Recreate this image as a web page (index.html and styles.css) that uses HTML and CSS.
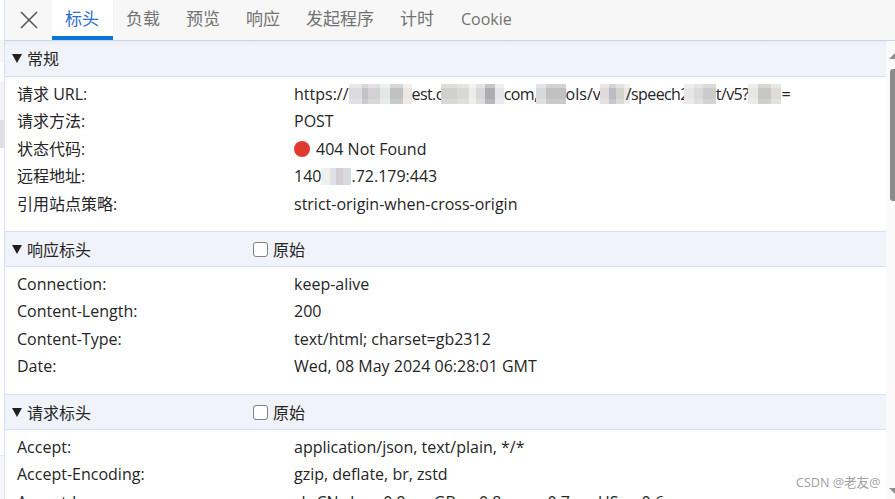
FILE: index.html
```html
<!DOCTYPE html>
<html lang="zh-CN">
<head>
<meta charset="utf-8">
<title>标头</title>
<link rel="stylesheet" href="styles.css">
</head>
<body>
<div class="page">
  <aside class="strip">
    <div class="s s1"></div><div class="s s2"></div><div class="s s3"></div><div class="s s4"></div><div class="s s5"></div><div class="s s6"></div>
  </aside>
  <main class="main">
    <nav class="tabs">
      <button class="close" aria-label="关闭">
        <svg width="18" height="18" viewBox="0 0 18 18"><path d="M1 1L17 17M17 1L1 17" fill="none" stroke="#555" stroke-width="1.6"/></svg>
      </button>
      <span class="tab active">标头</span>
      <span class="tab">负载</span>
      <span class="tab">预览</span>
      <span class="tab">响应</span>
      <span class="tab">发起程序</span>
      <span class="tab">计时</span>
      <span class="tab">Cookie</span>
    </nav>
    <div class="body">
      <div class="content">
        <section class="sec">
          <header class="head"><i class="tri"></i><span class="title">常规</span></header>
          <div class="rows first">
            <div class="row"><span class="k">请求 URL:</span><span class="v">https://<i class="r r1"></i><span class="tight">est.c</span><i class="r r2"></i><span class="tight">com,</span><i class="r r3"></i>ols/v<i class="r r4"></i><span class="tight">/speech2</span><i class="r r5"></i><span class="tight">t/v5?</span><i class="r r6"></i>=</span></div>
            <div class="row"><span class="k">请求方法:</span><span class="v">POST</span></div>
            <div class="row"><span class="k">状态代码:</span><span class="v"><i class="dot"></i>404 Not Found</span></div>
            <div class="row"><span class="k">远程地址:</span><span class="v">140<i class="r r7"></i>.72.179:443</span></div>
            <div class="row"><span class="k">引用站点策略:</span><span class="v">strict-origin-when-cross-origin</span></div>
          </div>
        </section>
        <section class="sec">
          <header class="head"><i class="tri"></i><span class="title">响应标头</span><i class="check"></i><span>原始</span></header>
          <div class="rows">
            <div class="row"><span class="k">Connection:</span><span class="v">keep-alive</span></div>
            <div class="row"><span class="k">Content-Length:</span><span class="v">200</span></div>
            <div class="row"><span class="k">Content-Type:</span><span class="v">text/html; charset=gb2312</span></div>
            <div class="row"><span class="k">Date:</span><span class="v">Wed, 08 May 2024 06:28:01 GMT</span></div>
          </div>
        </section>
        <section class="sec">
          <header class="head"><i class="tri"></i><span class="title">请求标头</span><i class="check"></i><span>原始</span></header>
          <div class="rows">
            <div class="row"><span class="k">Accept:</span><span class="v">application/json, text/plain, */*</span></div>
            <div class="row"><span class="k">Accept-Encoding:</span><span class="v">gzip, deflate, br, zstd</span></div>
            <div class="row"><span class="k">Accept-Language:</span><span class="v">zh-CN,zh;q=0.9,en-GB;q=0.8,en;q=0.7,en-US;q=0.6</span></div>
          </div>
        </section>
      </div>
      <div class="scrollbar">
        <i class="arrow up"></i>
        <i class="thumb"></i>
        <i class="arrow down"></i>
      </div>
    </div>
  </main>
</div>
<div class="mark">CSDN @老友@</div>
</body>
</html>
```
FILE: styles.css
```css
* { box-sizing: border-box; }
html, body { margin: 0; height: 100%; overflow: hidden; background: #fff; }
body {
  font-family: "Open Sans", "Noto Sans CJK SC", sans-serif;
  font-size: 16px;
  color: #252525;
}
i { font-style: normal; }
.page { display: flex; width: 895px; height: 499px; }

.strip {
  width: 5px;
  flex: none;
  display: flex;
  flex-direction: column;
  border-right: 1px solid #d3e2f8;
}
.s1 { height: 40px; background: #fff; }
.s2 { height: 22px; background: #f5f5f5; }
.s3 { height: 20px; background: #fff; }
.s4 { height: 38px; background: #f3f3f3; }
.s5 { height: 28px; background: #dfdfdf; }
.s6 { flex: 1; background: linear-gradient(#fff 0, #fff 307px, #dfe7f3 307px, #dfe7f3 308px, #f6f6f6 308px); }

.main { flex: 1; min-width: 0; display: flex; flex-direction: column; }

.tabs {
  height: 41px;
  flex: none;
  display: flex;
  align-items: stretch;
  background: #f7f7f7;
  border-bottom: 1px solid #c6d6ea;
}
.close {
  width: 47px;
  flex: none;
  border: 0;
  padding: 0 0 1px 0;
  background: none;
  display: flex;
  align-items: center;
  justify-content: center;
}
.tab {
  padding: 0 13px 1px;
  font-size: 17px;
  line-height: 38px;
  color: #727272;
  white-space: nowrap;
}
.tab:last-child { font-size: 16px; margin-left: 1px; }
.tab.active {
  color: #2a6fcf;
  background: #fff;
  box-shadow: inset 0 -4px 0 #0a78d7;
  height: 40px;
  width: 61px;
}

.body { flex: 1; min-height: 0; display: flex; }
.content { flex: 1; min-width: 0; overflow: hidden; }

.sec { display: block; }
.head {
  height: 36px;
  display: flex;
  align-items: center;
  padding: 0 0 1px 7px;
  background: linear-gradient(#e9edf3 0, #f0f3f9 4px);
  border-bottom: 1px solid #d3e2f8;
  white-space: nowrap;
}
.sec + .sec .head {
  padding: 1px 0 0 7px;
  background: #f0f3f9;
  border-top: 1px solid #d3e2f8;
}
.tri {
  width: 0;
  height: 0;
  margin: 1px 5px 0 0;
  border-style: solid;
  border-width: 9px 5px 0;
  border-color: #202020 transparent transparent;
}
.title { width: 226px; flex: none; }
.check {
  width: 15px;
  height: 15px;
  margin-right: 5px;
  border: 1.5px solid #808080;
  border-radius: 3px;
  background: #fff;
}
.rows { padding: 3.5px 0 13.5px 12px; }
.rows.first { padding: 3px 0 13px 12px; }
.rows.first .k { margin-bottom: 2px; }
.row { height: 27.5px; display: flex; align-items: center; white-space: nowrap; }
.k { width: 277px; flex: none; }
.v { display: block; }
.tight { letter-spacing: -.6px; }
.dot {
  display: inline-block;
  width: 16px;
  height: 16px;
  margin-right: 6px;
  border-radius: 50%;
  background: #e03a30;
  vertical-align: -2px;
}

.r {
  display: inline-block;
  height: 20px;
  vertical-align: -4px;
}
.r1 { width: 63px; background: linear-gradient(rgba(255,255,255,.35) 0 20%, transparent 20% 75%, rgba(255,255,255,.15) 75%), linear-gradient(90deg, #dcdce0 0 20%, #c2c2c6 20% 30%, #d2d2d6 30% 50%, #e2e9e4 50% 65%, #c0c0c2 65% 85%, #ebe7e3 85%); }
.r2 { width: 63px; margin-left: -2px; background: linear-gradient(rgba(255,255,255,.3) 0 20%, transparent 20% 75%, rgba(255,255,255,.15) 75%), linear-gradient(90deg, #d2d0ce 0 25%, #d8d8d4 25% 45%, #eeece8 45% 55%, #d8d8dc 55% 70%, #adadb1 70% 85%, #e6e6ea 85%); }
.r3 { width: 30px; margin-left: -2px; background: linear-gradient(rgba(255,255,255,.3) 0 20%, transparent 20% 75%, rgba(255,255,255,.15) 75%), linear-gradient(90deg, #d9d9dc 0 35%, #c0c0c2 35% 100%); }
.r4 { width: 30px; margin: 0 -4px 0 -1px; background: linear-gradient(rgba(255,255,255,.35) 0 20%, transparent 20% 75%, rgba(255,255,255,.15) 75%), linear-gradient(90deg, #e2dada 0 30%, #bcbcc4 30% 55%, #d2d4cc 55% 80%, #e8e8e8 80%); }
.r5 { width: 32px; margin-left: -5px; background: linear-gradient(rgba(255,255,255,.3) 0 20%, transparent 20% 75%, rgba(255,255,255,.15) 75%), linear-gradient(90deg, #e6e6e6 0 30%, #dadada 30% 60%, #cbcbce 60% 100%); }
.r6 { width: 33px; background: linear-gradient(rgba(255,255,255,.3) 0 20%, transparent 20% 75%, rgba(255,255,255,.15) 75%), linear-gradient(90deg, #e6e6e6 0 30%, #c8c6c2 30% 70%, #dcdcd8 70% 100%); }
.r7 { width: 30px; height: 17px; vertical-align: -3px; background: linear-gradient(90deg, #eef0f0 0 30%, #dde2e6 30% 50%, #d4ced2 50% 75%, #d6dae0 75%); }

.scrollbar {
  width: 9px;
  flex: none;
  display: flex;
  flex-direction: column;
  align-items: flex-end;
  background: #fafafa;
}
.arrow { width: 0; height: 0; border-style: solid; }
.up { margin-top: 12px; border-width: 0 0 6px 6px; border-color: transparent transparent #8f8f8f; }
.thumb { width: 5px; height: 132px; margin-top: 10px; background: #8c8c8c; border-radius: 3px 0 0 3px; }
.down { margin-top: auto; margin-bottom: 5px; border-width: 6px 0 0 6px; border-color: #8f8f8f transparent transparent; }

.mark {
  position: absolute;
  left: 796px;
  top: 475px;
  font-size: 12.6px;
  line-height: 16px;
  color: #a0a0a0;
  white-space: nowrap;
}
```
